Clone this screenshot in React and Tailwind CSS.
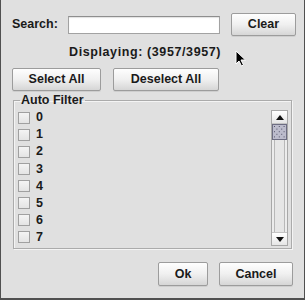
import React from "react";

const font = { fontFamily: '"Liberation Sans", Arial, sans-serif' };

function Btn({ children, className = "" }) {
  return (
    <button
      className={
        "flex items-center justify-center rounded-[2px] border border-[#9c9c9c] bg-gradient-to-b from-[#fefefe] via-[#f0f0f0] to-[#d6d6d6] text-[12.5px] font-bold text-[#1a1a1a] shadow-[0_1px_0_rgba(0,0,0,0.08)] " +
        className
      }
    >
      {children}
    </button>
  );
}

function Thumb() {
  const dots = [];
  for (let r = 0; r < 5; r++) {
    for (let c = 0; c < 5; c++) {
      if ((r + c) % 2 === 0) dots.push(<rect key={r + "-" + c} x={2 + c * 2.4} y={2 + r * 2.6} width="1" height="1" fill="#55556a" />);
    }
  }
  return (
    <svg width="15" height="16" className="block">
      <rect x="0.5" y="0.5" width="14" height="15" fill="#bcbccc" stroke="#6d6d82" />
      {dots}
    </svg>
  );
}

export default function App() {
  const items = ["0", "1", "2", "3", "4", "5", "6", "7"];
  return (
    <div
      style={font}
      className="relative flex h-[300px] w-[305px] flex-col border-b-2 border-l border-r border-[#505050] bg-[#e0e0e0] text-[#1a1a1a]"
    >
      {/* Search row */}
      <div className="mt-[13px] flex h-[23px] items-center pl-[11px]">
        <span className="w-[56px] text-[12.5px] font-bold leading-none">Search:</span>
        <div className="h-[18px] w-[152px] border border-[#a2a2a2] border-t-[#8e8e8e] bg-white shadow-[inset_0_1px_1px_rgba(0,0,0,0.12)]" />
        <Btn className="ml-[11px] h-[23px] w-[65px]">Clear</Btn>
      </div>

      <div className="ml-[68px] mt-[8px] h-[16px] text-[12.5px] font-bold leading-[16px] tracking-[0.6px]">
        Displaying: (3957/3957)
      </div>

      {/* select buttons */}
      <div className="mt-[8px] flex h-[23px] pl-[11px]">
        <Btn className="h-[23px] w-[89px]">Select All</Btn>
        <Btn className="ml-[12px] h-[23px] w-[106px]">Deselect All</Btn>
      </div>

      {/* group */}
      <fieldset className="m-0 ml-[12px] mt-[1px] h-[157px] w-[279px] border border-[#ababab] p-0 shadow-[inset_1px_1px_0_#f4f4f4,1px_1px_0_#f4f4f4]">
        <legend className="ml-[6px] px-[1px] text-[12.5px] font-bold leading-[16px]">Auto Filter</legend>
        <div className="flex">
          <div className="flex flex-1 flex-col pl-[4px] pt-[1px]">
            {items.map((t) => (
              <div key={t} className="flex h-[17.1px] items-center">
                <div className="h-[12px] w-[12px] border border-[#a0a0a0] bg-gradient-to-b from-[#f4f4f4] to-[#e4e4e4]" />
                <span className="ml-[6px] text-[12.5px] font-bold leading-none">{t}</span>
              </div>
            ))}
          </div>
          <div className="mr-[3px] mt-[2px] flex h-[136px] w-[17px] flex-col border border-[#a8a8a8] bg-[#ececec]">
            <div className="flex h-[13px] items-center justify-center border-b border-[#c4c4c4] bg-gradient-to-b from-white to-[#e6e6e6]">
              <svg width="8" height="5"><polygon points="4,0 8,5 0,5" fill="#111" /></svg>
            </div>
            <Thumb />
            <div className="mx-[2px] flex-1 border-x border-[#b8b8b8] bg-[#e6e6e6]" />
            <div className="flex h-[13px] items-center justify-center border-t border-[#c4c4c4] bg-gradient-to-b from-white to-[#e6e6e6]">
              <svg width="8" height="5"><polygon points="0,0 8,0 4,5" fill="#111" /></svg>
            </div>
          </div>
        </div>
      </fieldset>

      {/* bottom buttons */}
      <div className="mt-[13px] flex justify-end pr-[11px]">
        <Btn className="h-[24px] w-[50px]">Ok</Btn>
        <Btn className="ml-[11px] h-[24px] w-[74px]">Cancel</Btn>
      </div>

      {/* mouse cursor */}
      <svg className="absolute left-[234px] top-[50px]" width="12" height="17" viewBox="0 0 12 17">
        <path d="M1 1 L1 14 L4 11 L6.5 16 L8.5 15 L6 10 L10.5 10 Z" fill="#000" stroke="#fff" strokeWidth="1" />
      </svg>
    </div>
  );
}
